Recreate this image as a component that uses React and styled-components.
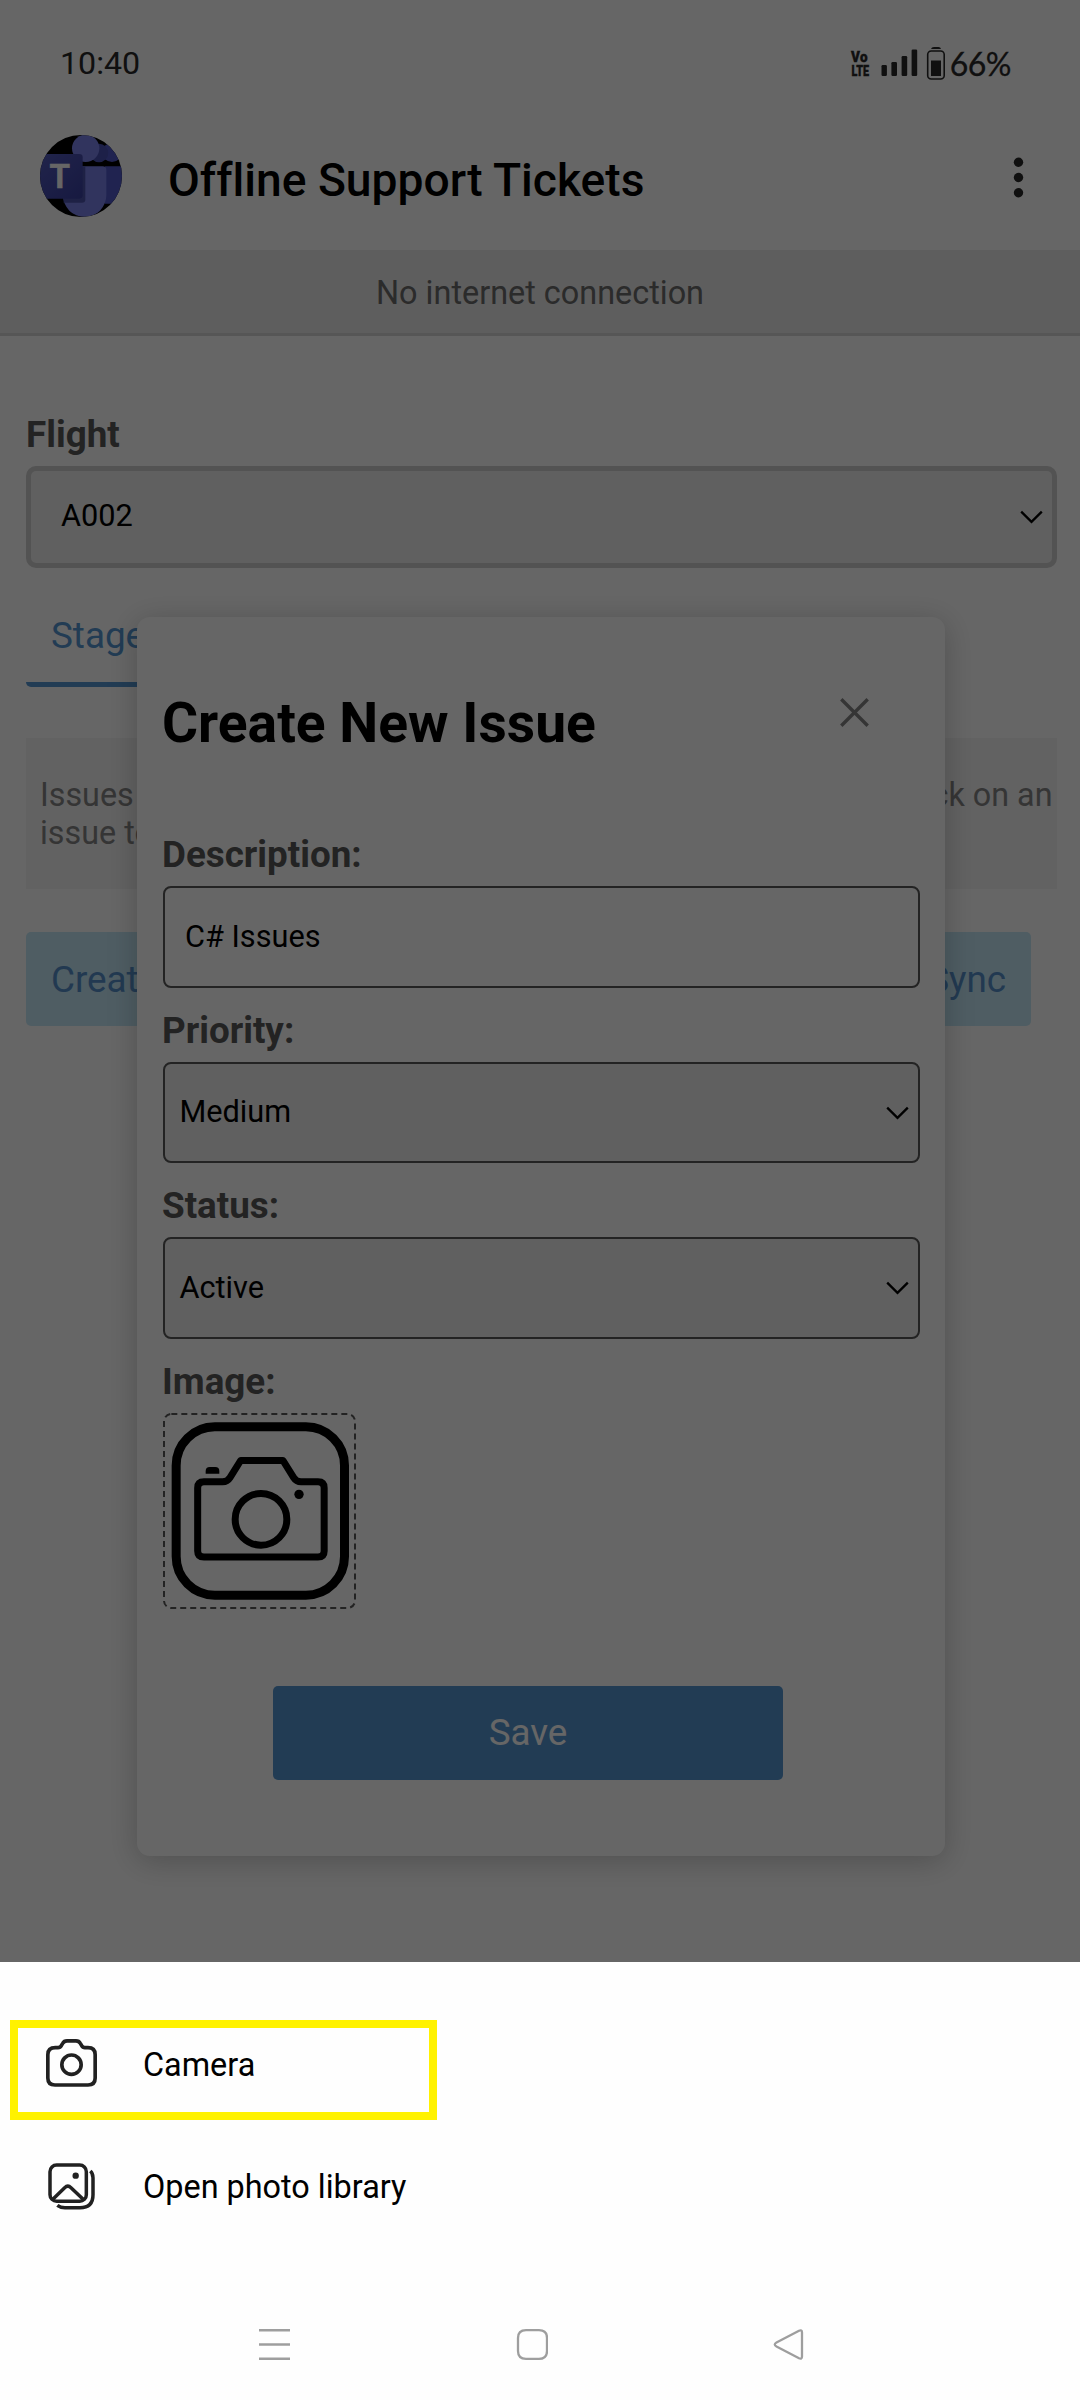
import React from "react";
import styled, { createGlobalStyle } from "styled-components";

const GlobalStyle = createGlobalStyle`
  * { box-sizing: border-box; }
  body { margin: 0; background: #fff; font-family: Roboto, "Liberation Sans", sans-serif; }
  svg { display: block; flex: none; }
`;

const Screen = styled.div`
  width: 1080px;
  height: 2400px;
  display: flex;
  flex-direction: column;
  overflow: hidden;
  background: #fff;
`;
const Page = styled.div`
  position: relative;
  height: 1962px;
  flex: none;
  overflow: hidden;
`;
const Scrim = styled.div`
  position: absolute;
  inset: 0;
  background: rgba(0, 0, 0, 0.6);
`;

/* Status bar and app header */
const StatusBar = styled.div`
  height: 127px;
  padding: 0 69px 0 60px;
  display: flex;
  align-items: center;
  justify-content: space-between;
  color: #292929;
`;
const Clock = styled.span`
  padding-bottom: 2px;
  font-size: 32.2px;
`;
const StatusIcons = styled.div`
  display: flex;
  align-items: center;
`;
const NetworkBadge = styled.div`
  width: 19px;
  height: 28px;
  margin-right: 14px;
  display: grid;
  grid-template-rows: 14px 14px;
  justify-items: center;
`;
const NetworkLine = styled.span`
  font: 900 15px/14px Roboto, sans-serif;
  letter-spacing: ${(p) => p.$spacing};
  -webkit-text-stroke: 0.4px #292929;
  transform: scaleX(${(p) => p.$stretch});
`;
const BatteryLevel = styled.span`
  font: 400 32px Lato, sans-serif;
  letter-spacing: -0.5px;
  -webkit-text-stroke: 0.3px #292929;
  margin-left: 5px;
`;
const Header = styled.header`
  height: 123px;
  padding: 8px 50px 0 40px;
  display: flex;
  align-items: flex-start;
`;
const AppTitle = styled.h1`
  margin: 4px auto 0 46px;
  font-size: 46.2px;
  font-weight: 500;
  line-height: 82px;
  font-variant-ligatures: none;
  color: #000;
`;
const Banner = styled.div`
  height: 86px;
  line-height: 86px;
  text-align: center;
  font-size: 32.4px;
  color: #6b6b6b;
  background: #ebebeb;
  border-bottom: 3px solid #d6d6d6;
`;

/* Form parts */
const Label = styled.label`
  display: block;
  height: 44px;
  line-height: 45.5px;
  margin-bottom: 10px;
  font-size: 36.8px;
  font-weight: 700;
  color: #575757;
`;
const Field = styled.div`
  height: ${(p) => p.$height || "101.5px"};
  margin-bottom: 20px;
  display: flex;
  align-items: center;
  justify-content: space-between;
  padding: 0 ${(p) => p.$right || "9px"} ${(p) => p.$bottom || "1.5px"} ${(p) => p.$left || "15px"};
  border: ${(p) => p.$border || "2px solid #575757"};
  border-radius: ${(p) => p.$radius || "8px"};
  background: ${(p) => (p.$plain ? "#fff" : "#efefef")};
  font-size: 30.7px;
  color: #000;
`;
const FieldArrow = styled.span`
  padding-top: 2px;
`;

/* Page content */
const Content = styled.main`
  padding: 76px 23px 0 26px;
`;
const Tabs = styled.div`
  display: flex;
`;
const Tab = styled.div`
  width: 180px;
  height: 99px;
  line-height: 96px;
  padding-left: 25px;
  font-size: 36.8px;
  color: #5596d2;
  border-bottom: 5px solid #5596d2;
  border-radius: 0 0 5px 5px;
`;
const Notice = styled.div`
  height: 151px;
  margin-top: 51px;
  padding: 38px 4.5px 0 14px;
  background: #f5f5f5;
  font-size: 32.3px;
  line-height: 38.3px;
  color: #858585;
`;
const NoticeLine = styled.div`
  display: flex;
  justify-content: space-between;
`;
const Actions = styled.div`
  margin: 43px 26px 0 0;
  display: flex;
  justify-content: space-between;
`;
const ActionButton = styled.button`
  height: 94px;
  padding: 0 25px;
  border: 0;
  border-radius: 5px;
  background: #c5e8f7;
  color: #5590cb;
  font: 400 36.8px Roboto, sans-serif;
`;

/* Dialog */
const Dialog = styled.section`
  position: absolute;
  left: 137px;
  top: 617px;
  width: 808px;
  height: 1239px;
  padding: 74px 25px 0 26px;
  border-radius: 13px;
  background: #fff;
  box-shadow: 0 5px 30px rgba(0, 0, 0, 0.22);
`;
const DialogHead = styled.div`
  display: flex;
  align-items: flex-start;
  justify-content: space-between;
  height: 66px;
  margin-bottom: 75px;
  padding-right: 51px;
`;
const DialogTitle = styled.h2`
  margin: 0 0 0 -1px;
  font-size: 55.2px;
  font-weight: 700;
  line-height: 65px;
  color: #000;
`;
const DialogLabel = styled(Label)`
  margin-left: -1px;
`;
const CloseButton = styled.button`
  margin-top: 7px;
  padding: 0;
  border: 0;
  background: none;
`;
const ImagePicker = styled.div`
  width: 193px;
  height: 196px;
`;
const SaveButton = styled.button`
  display: block;
  width: 510px;
  height: 94px;
  margin: 77.5px 0 0 110px;
  padding: 0 0 2px;
  border: 0;
  border-radius: 5px;
  background: #5596d2;
  color: #fff;
  font: 400 36.8px Roboto, sans-serif;
`;

/* Bottom sheet */
const Sheet = styled.div`
  flex: 1;
  padding-top: 58px;
  background: #fefefe;
`;
const SheetItem = styled.div`
  width: 427px;
  height: 100px;
  margin: 0 0 17px 10px;
  padding: 0 0 ${(p) => (p.$highlighted ? "10px" : "0")} 28px;
  border: 8px solid ${(p) => (p.$highlighted ? "#fff200" : "transparent")};
  display: flex;
  align-items: center;
  font-size: 32.4px;
  white-space: nowrap;
  color: #000;
`;
const SheetIcon = styled.span`
  width: 51px;
  margin-right: 46px;
  padding-bottom: ${(p) => p.$lift || "2px"};
  display: flex;
  justify-content: center;
`;
const NavBar = styled.nav`
  height: 40px;
  margin-top: 87px;
  padding: 0 275.5px 0 258px;
  display: flex;
  align-items: center;
  justify-content: space-between;
`;

const Chevron = () => (
  <FieldArrow>
    <svg width="23" height="14" viewBox="0 0 23 14" fill="none" stroke="#000" strokeWidth="2.3">
      <path d="M1.2 1.6 11.5 11.9 21.8 1.6" />
    </svg>
  </FieldArrow>
);

const TeamsLogo = () => (
  <svg width="82" height="82" viewBox="30 44 246 246">
    <defs>
      <clipPath id="disc"><circle cx="153" cy="167" r="123" /></clipPath>
      <linearGradient id="tile" x1="0" y1="0" x2="1" y2="1">
        <stop offset="0" stopColor="#545cbc" />
        <stop offset="1" stopColor="#393fa2" />
      </linearGradient>
    </defs>
    <g clipPath="url(#disc)">
      <rect x="30" y="44" width="246" height="246" fill="#000" />
      <circle cx="246" cy="96" r="29" fill="#5059c9" />
      <circle cx="207" cy="98" r="28" fill="#4a51b4" />
      <circle cx="167" cy="84" r="41" fill="#7b83eb" />
      <path d="M225 138H280V250H225Z" fill="#5059c9" />
      <path d="M98 138H218Q229 138 229 149V225A65 65 0 0 1 99 225Z" fill="#7b83eb" />
      <path d="M98 138H166V238Q166 247 156 247H101Z" fill="#4d54ad" />
      <rect x="20" y="101" width="138" height="134" rx="10" fill="url(#tile)" />
      <text x="89" y="204" textAnchor="middle" fontFamily="Lato, sans-serif" fontWeight="700" fontSize="100" fill="#fff" stroke="#fff" strokeWidth="2">T</text>
    </g>
  </svg>
);

const SignalAndBattery = () => (
  <svg width="64" height="36" viewBox="881 45 64 36" fill="#292929">
    <rect x="881.5" y="64" width="5.4" height="11" rx="1.2" />
    <rect x="891.4" y="61" width="5.6" height="14" rx="1.2" />
    <rect x="901.6" y="55" width="5.6" height="20" rx="1.2" />
    <rect x="911.6" y="48.5" width="5.6" height="26.5" rx="1.2" />
    <path d="M931 48Q931.5 46 934 46H938.5Q940.5 46 941 48Z" />
    <rect x="927.7" y="50" width="16.5" height="28" rx="3.5" fill="none" stroke="#292929" strokeWidth="1.6" />
    <rect x="931" y="59.5" width="10" height="15.5" />
  </svg>
);

const MoreIcon = () => (
  <svg width="23" height="82" viewBox="1007 135 23 82" fill="#292929">
    <circle cx="1018.5" cy="162.3" r="4.7" />
    <circle cx="1018.5" cy="177.5" r="4.7" />
    <circle cx="1018.5" cy="192.7" r="4.7" />
  </svg>
);

const PickerArt = () => (
  <svg width="193" height="196" viewBox="69 69 579 588" fill="none" stroke="#000">
    <rect x="72" y="72" width="573" height="582" rx="22" stroke="#575757" strokeWidth="6" strokeDasharray="18 12" />
    <rect x="108.5" y="110.5" width="505" height="505" rx="116" strokeWidth="27" />
    <path
      d="M192 275.5H248Q262 275.5 270 263L302 211.5H429L461 263Q469 275.5 483 275.5H534Q552.5 275.5 552.5 294V483Q552.5 501 534 501H192Q173 501 173 483V294Q173 275.5 192 275.5Z"
      strokeWidth="21"
      strokeLinejoin="round"
    />
    <circle cx="363" cy="388" r="77.5" strokeWidth="21" />
    <circle cx="477" cy="313" r="14" fill="#000" stroke="none" />
    <path d="M197 251V243Q197 231 209 231H226Q238 231 238 243V251Z" fill="#000" stroke="none" />
  </svg>
);

const CameraIcon = () => (
  <svg width="51" height="48" viewBox="138 147 153 144" fill="none" stroke="#212121" strokeWidth="11">
    <path d="M166 173H174Q181 173 184 167L188 160Q192 152.5 201 152.5H228Q237 152.5 241 160L245 167Q248 173 255 173H264Q285.5 173 285.5 194V264Q285.5 285 264 285H165Q143.5 285 143.5 264V194Q143.5 173 166 173Z" />
    <circle cx="214.5" cy="224" r="29" />
  </svg>
);

const GalleryIcon = () => (
  <svg width="47" height="47" viewBox="145 516 141 141" fill="none" stroke="#212121" strokeWidth="10.5">
    <rect x="151" y="522" width="109" height="109" rx="20" />
    <path d="M158 626 195 590Q204.5 581 214 590L252 626" />
    <circle cx="228" cy="554" r="9.5" fill="#212121" stroke="none" />
    <path d="M272 540Q280 547 280 560V611Q280 650 241 650H196Q182 650 173 643" />
  </svg>
);

const options = [
  { label: "Description:", value: "C# Issues", plain: true },
  { label: "Priority:", value: "Medium" },
  { label: "Status:", value: "Active" },
];

export default function App() {
  return (
    <Screen>
      <GlobalStyle />
      <Page>
        <StatusBar>
          <Clock>10:40</Clock>
          <StatusIcons>
            <NetworkBadge>
              <NetworkLine $spacing="0.5px" $stretch={0.9}>Vo</NetworkLine>
              <NetworkLine $spacing="0" $stretch={0.72}>LTE</NetworkLine>
            </NetworkBadge>
            <SignalAndBattery />
            <BatteryLevel>66%</BatteryLevel>
          </StatusIcons>
        </StatusBar>
        <Header>
          <TeamsLogo />
          <AppTitle>Offline Support Tickets</AppTitle>
          <MoreIcon />
        </Header>
        <Banner>No internet connection</Banner>
        <Content>
          <Label>Flight</Label>
          <Field $height="102px" $border="5px solid #cfcfcf" $radius="10px" $left="30px" $right="9px" $bottom="2.5px">
            A002
            <Chevron />
          </Field>
          <Tabs>
            <Tab>Stage</Tab>
          </Tabs>
          <Notice>
            <NoticeLine>
              <span>Issues</span>
              <span>Click on an</span>
            </NoticeLine>
            <NoticeLine>issue to</NoticeLine>
          </Notice>
          <Actions>
            <ActionButton>Create</ActionButton>
            <ActionButton>Sync</ActionButton>
          </Actions>
        </Content>
        <Dialog>
          <DialogHead>
            <DialogTitle>Create New Issue</DialogTitle>
            <CloseButton aria-label="Close">
              <svg width="29" height="29" viewBox="0 0 29 29" stroke="#858585" strokeWidth="3.4">
                <path d="M1.3 1.3 27.7 27.7M27.7 1.3 1.3 27.7" />
              </svg>
            </CloseButton>
          </DialogHead>
          {options.map((o) => (
            <div key={o.label}>
              <DialogLabel>{o.label}</DialogLabel>
              <Field $plain={o.plain} $left={o.plain ? "20px" : "14.5px"}>
                {o.value}
                {!o.plain && <Chevron />}
              </Field>
            </div>
          ))}
          <DialogLabel>Image:</DialogLabel>
          <ImagePicker>
            <PickerArt />
          </ImagePicker>
          <SaveButton>Save</SaveButton>
        </Dialog>
        <Scrim />
      </Page>
      <Sheet>
        <SheetItem $highlighted>
          <SheetIcon $lift="4px"><CameraIcon /></SheetIcon>
          Camera
        </SheetItem>
        <SheetItem>
          <SheetIcon><GalleryIcon /></SheetIcon>
          Open photo library
        </SheetItem>
        <NavBar>
          <svg width="33" height="33" viewBox="0 0 33 33" stroke="#9e9e9e" strokeWidth="2.6">
            <path d="M1 2.3H32M1 16.5H32M1 30.7H32" />
          </svg>
          <svg width="33" height="33" viewBox="0 0 33 33" fill="none" stroke="#9e9e9e" strokeWidth="2.3">
            <path d="M11 2.2H24Q32 2.2 32 10V23Q32 30.8 24 30.8H11Q3 30.8 3 23V10Q3 2.2 11 2.2Z" />
          </svg>
          <svg width="33" height="33" viewBox="0 0 33 33" fill="none" stroke="#9e9e9e" strokeWidth="2.3">
            <path d="M27 2.8 4.5 14.5Q1 16.5 4.5 18.5L27 30.2Q30 31.5 30 28.5V4.5Q30 1.5 27 2.8Z" />
          </svg>
        </NavBar>
      </Sheet>
    </Screen>
  );
}
